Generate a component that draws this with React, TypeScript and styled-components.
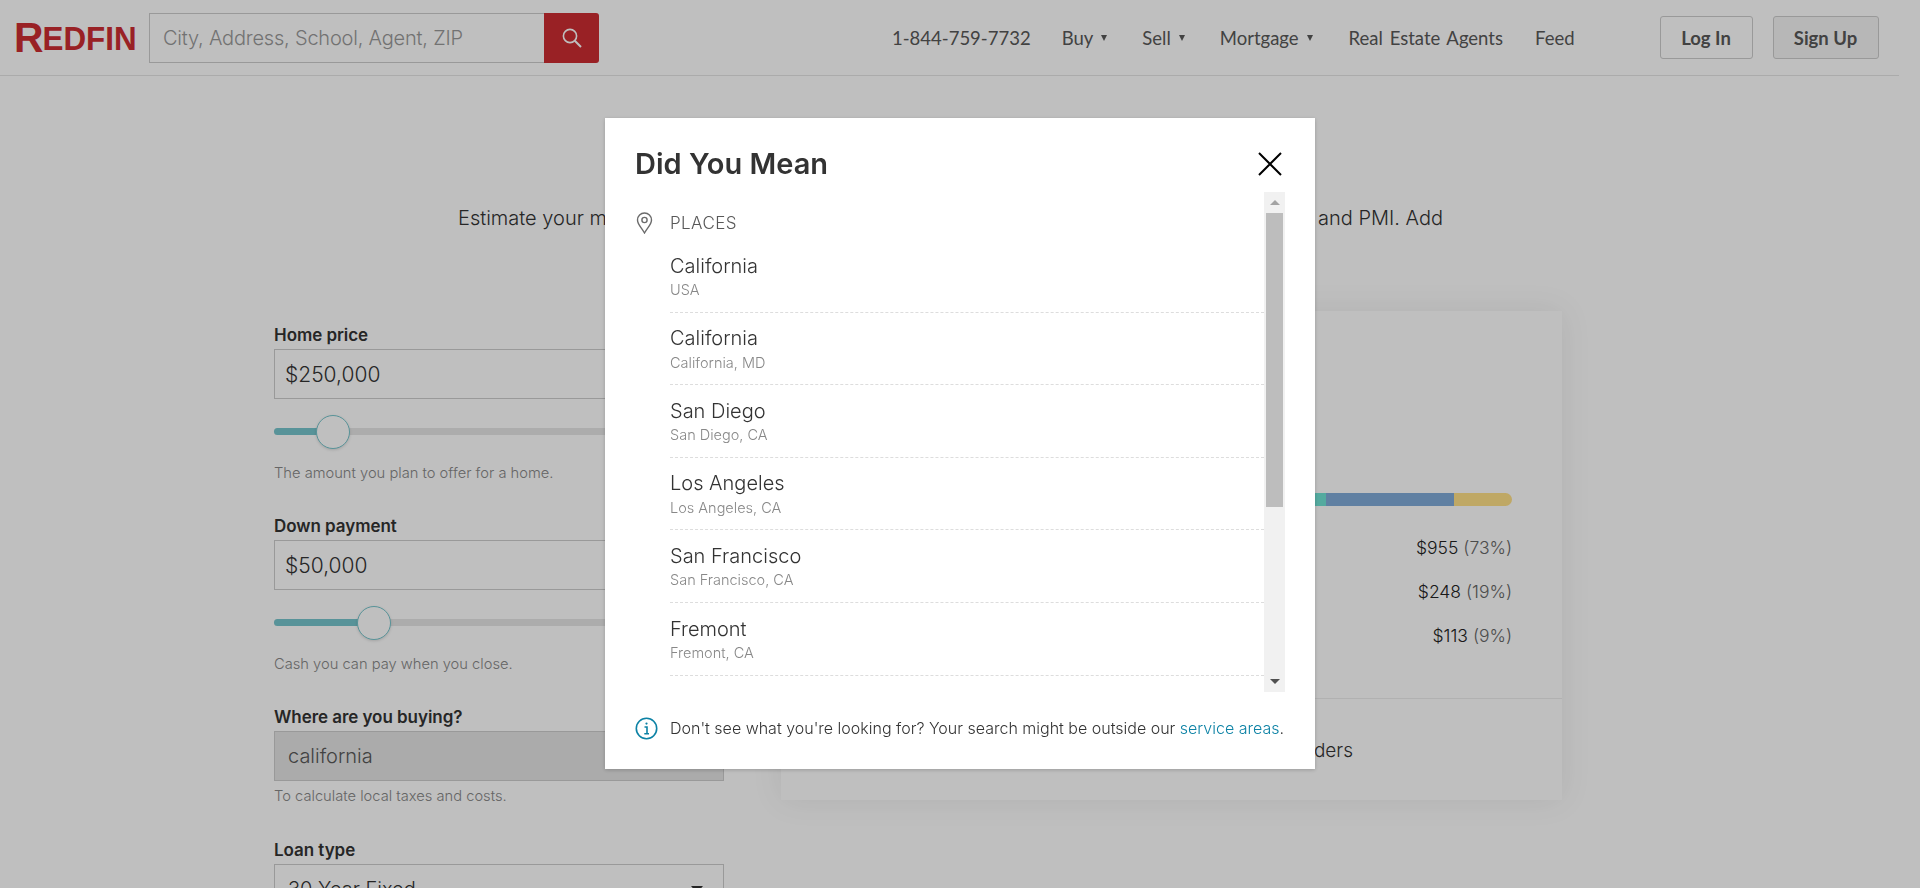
import React from "react";
import styled, { createGlobalStyle } from "styled-components";

const Global = createGlobalStyle`
  html, body { margin: 0; padding: 0; height: 888px; overflow: hidden; background: #fff; }
  body { font-family: Inter, "Liberation Sans", sans-serif; color: #333; }
  * { box-sizing: border-box; }
`;

const Page = styled.div`
  width: 1899px;
  height: 888px;
  overflow: hidden;
`;

const Header = styled.header`
  display: flex;
  align-items: center;
  height: 76px;
  padding: 0 20px 0 14px;
  border-bottom: 1px solid #e5e5e5;
`;

const Logo = styled.div`
  width: 120px;
  margin-right: 15px;
  font-family: "Liberation Sans", sans-serif;
  font-weight: 700;
  font-size: 33px;
  line-height: 36px;
  color: #cc2d32;
  white-space: nowrap;
  transform: scaleX(0.95);
  transform-origin: left center;
  span { font-size: 43px; line-height: 36px; vertical-align: -2px; letter-spacing: -1px; }
`;

const SearchBox = styled.div`
  display: flex;
  height: 50px;
  width: 450px;
`;

const SearchInput = styled.div`
  flex: 1;
  display: flex;
  align-items: center;
  padding-left: 13px;
  border: 1px solid #ccc;
  border-right: 0;
  font-size: 20px;
  font-weight: 300;
  letter-spacing: -0.2px;
  color: #999;
  background: #fff;
  white-space: nowrap;
`;

const SearchButton = styled.div`
  width: 55px;
  display: flex;
  align-items: center;
  justify-content: center;
  background: #cc2d32;
  border-radius: 0 3px 3px 0;
`;

const Nav = styled.nav`
  display: flex;
  align-items: center;
  margin-left: 293px;
  font-family: Lato, sans-serif;
  font-size: 18.5px;
  color: #585858;
`;

const NavItem = styled.span<{ $gap: number; $spread?: boolean }>`
  display: inline-flex;
  align-items: center;
  margin-right: ${(p) => p.$gap}px;
  word-spacing: ${(p) => (p.$spread ? 2 : 0)}px;
  white-space: pre;
`;

const Caret = styled.i`
  width: 0;
  height: 0;
  margin-left: 8px;
  border-left: 3.5px solid transparent;
  border-right: 3.5px solid transparent;
  border-top: 6px solid #585858;
`;

const AuthButton = styled.div<{ $filled?: boolean; $w: number }>`
  width: ${(p) => p.$w}px;
  height: 43px;
  display: flex;
  align-items: center;
  justify-content: center;
  margin-left: 20px;
  border: 1px solid #ccc;
  border-radius: 3px;
  background: ${(p) => (p.$filled ? "#f5f5f5" : "#fff")};
  font-family: Lato, sans-serif;
  font-weight: 700;
  font-size: 18.5px;
  color: #585858;
`;

const Intro = styled.p`
  margin: 0;
  padding: 130px 0 0 458px;
  height: 235px;
  font-size: 20px;
  line-height: 24px;
  font-weight: 300;
  color: #333;
  white-space: nowrap;
`;

const Content = styled.div`
  display: grid;
  grid-template-columns: 450px 781px;
  column-gap: 57px;
  padding-left: 274px;
`;

const Form = styled.div`
  display: flex;
  flex-direction: column;
  padding-top: 14px;
`;

const Field = styled.div<{ $mb: number }>`
  margin-bottom: ${(p) => p.$mb}px;
`;

const Label = styled.div`
  height: 24px;
  line-height: 20px;
  font-size: 17px;
  font-weight: 600;
  color: #333;
  letter-spacing: -0.05px;
`;

const Input = styled.div<{ $muted?: boolean }>`
  display: flex;
  align-items: center;
  justify-content: space-between;
  height: 50px;
  padding: 0 ${(p) => (p.$muted ? 13 : 10)}px;
  border: 1px solid #ccc;
  font-size: ${(p) => (p.$muted ? 20 : 21)}px;
  font-weight: 300;
  color: ${(p) => (p.$muted ? "#585858" : "#333")};
  background: ${(p) => (p.$muted ? "#e4e4e4" : "#fff")};
`;

const SelectValue = styled.div`
  display: flex;
  align-items: center;
  justify-content: space-between;
  height: 50px;
  padding: 0 20px 0 13px;
  border: 1px solid #ccc;
  font-size: 20px;
  font-weight: 300;
  color: #333;
`;

const SelectArrow = styled.i`
  width: 0;
  height: 0;
  border-left: 6px solid transparent;
  border-right: 6px solid transparent;
  border-top: 7px solid #333;
`;

const Slider = styled.div`
  position: relative;
  height: 7px;
  margin: 29px 0 28px;
  border-radius: 4px;
  background: #e6e6e6;
`;

const SliderFill = styled.div<{ $w: number }>`
  width: ${(p) => p.$w}px;
  height: 100%;
  border-radius: 4px 0 0 4px;
  background: #76c5cc;
`;

const SliderThumb = styled.div<{ $x: number }>`
  position: absolute;
  top: -13px;
  left: ${(p) => p.$x - 17}px;
  width: 34px;
  height: 34px;
  border-radius: 50%;
  border: 1.5px solid #76c5cc;
  background: #fff;
  box-shadow: 0 1px 3px rgba(0, 0, 0, 0.15);
`;

const Hint = styled.div<{ $mt?: number }>`
  margin-top: ${(p) => p.$mt ?? 0}px;
  font-size: 14.7px;
  line-height: 20px;
  font-weight: 300;
  color: #888;
`;

const Card = styled.section`
  height: 489px;
  display: flex;
  flex-direction: column;
  background: #fff;
  box-shadow: 0 0 30px rgba(0, 0, 0, 0.08);
`;

const CardBody = styled.div`
  flex: 1;
  padding: 182px 50px 0 40px;
  border-bottom: 1px solid #ededed;
`;

const Bar = styled.div`
  display: flex;
  height: 13px;
  margin-bottom: 25px;
  border-radius: 7px;
  overflow: hidden;
`;

const BarPart = styled.div<{ $c: string; $grow: number }>`
  flex: ${(p) => p.$grow} 0 0;
  background: ${(p) => p.$c};
`;

const Amount = styled.div`
  height: 44px;
  line-height: 34px;
  text-align: right;
  font-size: 17.5px;
  font-weight: 300;
  color: #222;
  span { color: #666; }
`;

const CardFoot = styled.div`
  height: 101px;
  display: flex;
  align-items: center;
  justify-content: flex-end;
  padding: 2px 209px 0 0;
  font-size: 19px;
  font-weight: 300;
  color: #333;
`;

const Backdrop = styled.div`
  position: fixed;
  inset: 0;
  background: rgba(0, 0, 0, 0.25);
`;

const Modal = styled.div`
  position: fixed;
  left: 605px;
  top: 118px;
  width: 710px;
  height: 651px;
  padding: 0 30px;
  background: #fff;
  box-shadow: 0 1px 4px rgba(0, 0, 0, 0.2);
`;

const ModalHead = styled.div`
  display: flex;
  align-items: center;
  justify-content: space-between;
  height: 74px;
  padding-right: 3px;
  padding-top: 18px;
`;

const Title = styled.h2`
  margin: 0;
  font-size: 29px;
  font-weight: 600;
  line-height: 36px;
  color: #333;
`;

const ListWrap = styled.div`
  display: flex;
  height: 500px;
`;

const List = styled.div`
  flex: 1;
  min-width: 0;
  overflow: hidden;
  padding-top: 21px;
`;

const GroupHead = styled.div`
  display: flex;
  align-items: center;
  gap: 16px;
  height: 20px;
  margin-bottom: 7px;
  font-size: 17px;
  font-weight: 300;
  letter-spacing: 0.4px;
  color: #585858;
`;

const Row = styled.div`
  height: 72.6px;
  margin-left: 35px;
  padding-top: 13.6px;
  border-bottom: 1px dashed #ddd;
`;

const Name = styled.div`
  font-size: 20px;
  font-weight: 300;
  line-height: 24px;
  color: #333;
`;

const Sub = styled.div`
  margin-top: 2.5px;
  font-size: 14.5px;
  font-weight: 300;
  line-height: 20px;
  color: #888;
`;

const Scrollbar = styled.div`
  width: 21px;
  display: flex;
  flex-direction: column;
  align-items: center;
  background: #f1f1f1;
`;

const ScrollArrow = styled.div<{ $down?: boolean }>`
  height: 21px;
  display: flex;
  align-items: center;
  justify-content: center;
  &::before {
    content: "";
    border-left: 5px solid transparent;
    border-right: 5px solid transparent;
    ${(p) => (p.$down ? "border-top: 5px solid #505050;" : "border-bottom: 5px solid #a3a3a3;")}
  }
`;

const ScrollTrack = styled.div`
  flex: 1;
  width: 17px;
`;

const ScrollThumb = styled.div`
  width: 100%;
  height: 294px;
  background: #bdbdbd;
`;

const Foot = styled.div`
  display: flex;
  align-items: center;
  gap: 12px;
  height: 72px;
  font-size: 16px;
  font-weight: 300;
  color: #333;
  white-space: nowrap;
  svg { flex: none; }
  a { color: #0c82a5; text-decoration: none; }
`;

const places: [string, string][] = [
  ["California", "USA"],
  ["California", "California, MD"],
  ["San Diego", "San Diego, CA"],
  ["Los Angeles", "Los Angeles, CA"],
  ["San Francisco", "San Francisco, CA"],
  ["Fremont", "Fremont, CA"],
];

export default function App() {
  return (
    <>
      <Global />
      <Page>
        <Header>
          <Logo><span>R</span>EDFIN</Logo>
          <SearchBox>
            <SearchInput>City, Address, School, Agent, ZIP</SearchInput>
            <SearchButton>
              <svg width="22" height="22" viewBox="0 0 22 22" fill="none" stroke="#fff" strokeWidth="1.6">
                <circle cx="9" cy="9" r="6.6" />
                <path d="M13.8 13.8 L20 20" strokeWidth="2" />
              </svg>
            </SearchButton>
          </SearchBox>
          <Nav>
            <NavItem $gap={31}>1-844-759-7732</NavItem>
            <NavItem $gap={35}>Buy<Caret /></NavItem>
            <NavItem $gap={35}>Sell<Caret /></NavItem>
            <NavItem $gap={36}>Mortgage<Caret /></NavItem>
            <NavItem $gap={32} $spread>Real Estate Agents</NavItem>
            <NavItem $gap={65}>Feed</NavItem>
          </Nav>
          <AuthButton $w={93}>Log In</AuthButton>
          <AuthButton $w={106} $filled>Sign Up</AuthButton>
        </Header>
        <Intro>Estimate your monthly mortgage payment with principal and interest, taxes, insurance, HOA, and PMI. Add</Intro>
        <Content>
          <Form>
            <Field $mb={33}>
              <Label>Home price</Label>
              <Input>$250,000</Input>
              <Slider>
                <SliderFill $w={60} />
                <SliderThumb $x={59} />
              </Slider>
              <Hint>The amount you plan to offer for a home.</Hint>
            </Field>
            <Field $mb={33}>
              <Label>Down payment</Label>
              <Input>$50,000</Input>
              <Slider>
                <SliderFill $w={101} />
                <SliderThumb $x={100} />
              </Slider>
              <Hint>Cash you can pay when you close.</Hint>
            </Field>
            <Field $mb={34}>
              <Label>Where are you buying?</Label>
              <Input $muted>california</Input>
              <Hint $mt={5}>To calculate local taxes and costs.</Hint>
            </Field>
            <Field $mb={0}>
              <Label>Loan type</Label>
              <SelectValue>30 Year Fixed<SelectArrow /></SelectValue>
            </Field>
          </Form>
          <Card>
            <CardBody>
              <Bar>
                <BarPart $c="#71e3d5" $grow={505} />
                <BarPart $c="#80abd9" $grow={128} />
                <BarPart $c="#ffe087" $grow={58} />
              </Bar>
              <Amount>$955 <span>(73%)</span></Amount>
              <Amount>$248 <span>(19%)</span></Amount>
              <Amount>$113 <span>(9%)</span></Amount>
            </CardBody>
            <CardFoot>Get rates from top lenders</CardFoot>
          </Card>
        </Content>
      </Page>
      <Backdrop />
      <Modal>
        <ModalHead>
          <Title>Did You Mean</Title>
          <svg width="24" height="24" viewBox="0 0 24 24" stroke="#000" strokeWidth="2" fill="none">
            <path d="M1 1 L23 23 M23 1 L1 23" />
          </svg>
        </ModalHead>
        <ListWrap>
          <List>
            <GroupHead>
              <svg width="19" height="22" viewBox="0 0 19 22" fill="none" stroke="#6b6b6b" strokeWidth="1.4">
                <path d="M9.5 21 C6.5 15.5 2.5 12.5 2.5 8 A7 7 0 0 1 16.5 8 C16.5 12.5 12.5 15.5 9.5 21 Z" />
                <circle cx="9.5" cy="8" r="2.6" />
              </svg>
              PLACES
            </GroupHead>
            {places.map(([n, s], i) => (
              <Row key={i}>
                <Name>{n}</Name>
                <Sub>{s}</Sub>
              </Row>
            ))}
          </List>
          <Scrollbar>
            <ScrollArrow />
            <ScrollTrack><ScrollThumb /></ScrollTrack>
            <ScrollArrow $down />
          </Scrollbar>
        </ListWrap>
        <Foot>
          <svg width="23" height="23" viewBox="0 0 23 23" fill="none" stroke="#0c82a5" strokeWidth="1.6">
            <circle cx="11.5" cy="11.5" r="10.2" />
            <path d="M9.5 10 H12 V16.5 M9.3 16.7 H14" strokeWidth="1.6" />
            <circle cx="11.5" cy="6.6" r="1.1" fill="#0c82a5" stroke="none" />
          </svg>
          <span>Don't see what you're looking for? Your search might be outside our <a href="#">service areas</a>.</span>
        </Foot>
      </Modal>
    </>
  );
}
